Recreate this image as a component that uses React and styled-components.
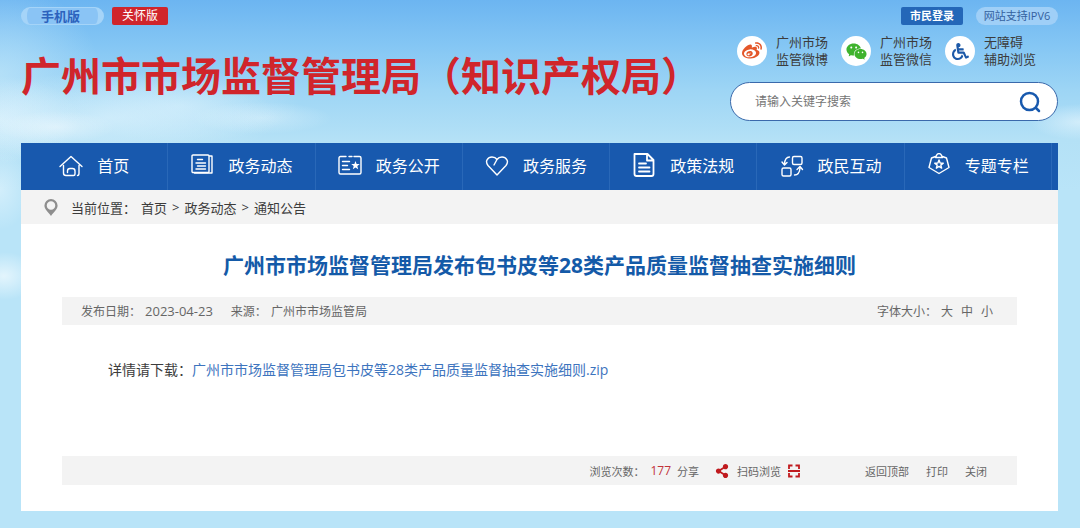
import React from 'react';
import styled, { createGlobalStyle, css } from 'styled-components';
import { FaWeibo, FaWheelchair, FaShareAlt } from 'react-icons/fa';
import { AiFillWechat } from 'react-icons/ai';

const blue = '#1859ae';
const red = '#d0252b';
const sky = '#b9e4f8';

const GlobalStyle = createGlobalStyle`
  *, *::before, *::after { box-sizing: border-box; }
  body {
    margin: 0;
    background: ${sky};
    color: #3c3c3c;
    font-family: "Open Sans", "Noto Sans CJK SC", sans-serif;
  }
  a { color: inherit; text-decoration: none; }
  button, input { font-family: inherit; }
  button { border: 0; padding: 0; background: none; color: inherit; cursor: pointer; }
`;

const Page = styled.div`
  min-height: 100vh;
  padding: 0 22px 17px 21px;
  background:
    radial-gradient(ellipse 60px 16px at 56px 127px, rgba(255, 255, 255, 0.4), transparent),
    radial-gradient(ellipse 170px 46px at 110px 118px, rgba(228, 246, 254, 0.55), transparent),
    radial-gradient(ellipse 120px 36px at 180px 106px, rgba(228, 246, 254, 0.45), transparent),
    radial-gradient(ellipse 70px 16px at 262px 118px, rgba(235, 248, 254, 0.4), transparent),
    radial-gradient(ellipse 80px 44px at 0 120px, rgba(235, 248, 254, 0.6), transparent),
    radial-gradient(ellipse 100px 90px at 0 74px, rgba(200, 234, 250, 0.6), transparent),
    radial-gradient(ellipse 34px 24px at 4px 276px, rgba(245, 252, 255, 0.7), transparent),
    radial-gradient(ellipse 30px 40px at 0 190px, rgba(235, 248, 254, 0.5), transparent),
    radial-gradient(ellipse 50px 18px at 100% 122px, rgba(235, 248, 254, 0.6), transparent),
    linear-gradient(#6cb5f1 0, #84c6f4 45px, #9dd5f5 90px, #b4e1f6 140px, ${sky} 190px);
  background-repeat: no-repeat;
`;

const Header = styled.header`
  display: flex;
  justify-content: space-between;
  padding: 7px 0 22px;
`;

const Brand = styled.div`
  display: flex;
  flex-direction: column;
  gap: 21px;
`;

const TopLinks = styled.div`
  display: flex;
  align-items: center;
  justify-content: ${(p) => (p.$end ? 'flex-end' : 'flex-start')};
  gap: ${(p) => (p.$end ? 13 : 8)}px;
  height: 18px;
`;

const looks = {
  mobile: css`
    width: 83px;
    padding-right: 4px;
    border: solid #a5d4f8;
    border-width: 1px 6px;
    border-radius: 9px;
    background: #8ac4f5;
    color: #2c62bd;
    font-size: 13px;
    font-weight: 700;
  `,
  care: css`
    width: 56px;
    border-radius: 2px;
    background: ${red};
    color: #fff;
    font-size: 12px;
  `,
  login: css`
    width: 62px;
    border-radius: 2px;
    background: #2467b8;
    color: #fff;
    font-size: 11px;
    font-weight: 700;
  `,
  ipv6: css`
    width: 82px;
    border-radius: 9px;
    background: #9fcff7;
    color: #34619f;
    font-size: 11px;
  `,
};

const Tag = styled.a`
  display: flex;
  align-items: center;
  justify-content: center;
  height: 18px;
  line-height: 16px;
  white-space: nowrap;
  ${(p) => looks[p.$look]}
`;

const SiteName = styled.h1`
  margin: 0;
  color: ${red};
  font-size: 40px;
  line-height: 60px;
  font-weight: 700;
  white-space: nowrap;
`;

const Tools = styled.div`
  width: 328px;
`;

const Channels = styled.div`
  display: grid;
  grid-template-columns: repeat(3, 104px);
  padding: 9px 0 14px 7px;
`;

const Channel = styled.a`
  display: flex;
  align-items: center;
  gap: 9px;
  font-size: 13px;
  line-height: 17px;
  white-space: pre-line;
`;

const Disc = styled.span`
  display: grid;
  place-items: center;
  width: 30px;
  height: 30px;
  border-radius: 50%;
  background: #fff;
  color: ${(p) => p.$color};
`;

const Search = styled.form`
  display: flex;
  align-items: center;
  height: 39px;
  padding: 0 15px 0 24px;
  border: 1px solid #3a69ab;
  border-radius: 20px;
  background: #fff;
  button { display: flex; color: ${blue}; }
`;

const SearchInput = styled.input`
  flex: 1;
  min-width: 0;
  padding: 0;
  border: 0;
  outline: 0;
  background: none;
  font-size: 12px;
  &::placeholder { color: #757575; opacity: 1; }
`;

const Nav = styled.nav`
  display: flex;
  height: 47px;
  padding-right: 6px;
  background: ${blue};
`;

const NavItem = styled.a`
  flex: 1;
  display: flex;
  align-items: center;
  justify-content: center;
  gap: 14px;
  padding-bottom: 3px;
  border-right: 1px solid #2968b8;
  color: #fff;
  font-size: 16px;
  white-space: nowrap;
`;

const Card = styled.main`
  background: #fff;
`;

const Crumbs = styled.nav`
  display: flex;
  align-items: center;
  gap: 5px;
  height: 34px;
  padding: 0 23px;
  background: #f3f3f3;
  font-size: 13px;
  svg { margin-right: 8px; }
`;

const Article = styled.article`
  padding: 26px 41px 26px;
`;

const Title = styled.h2`
  margin: 0 0 17px;
  color: #145aa8;
  font-size: 21px;
  line-height: 30px;
  font-weight: 700;
  text-align: center;
`;

const Bar = styled.div`
  display: flex;
  align-items: center;
  justify-content: space-between;
  height: 28px;
  padding: 0 24px 0 19px;
  background: #f3f3f3;
  color: #666;
  font-size: 12px;
`;

const Group = styled.div`
  display: flex;
  align-items: center;
  gap: ${(p) => p.$gap}px;
  button { font-size: 12px; }
`;

const PublishDate = styled.time`
  margin-right: 14px;
  font-size: 13px;
`;

const Body = styled.p`
  min-height: 98px;
  margin: 33px 0 0;
  padding: 0 46px;
  font-size: 14px;
  line-height: 24px;
`;

const Download = styled.a`
  color: #3d74be;
`;

const ActionBar = styled(Bar)`
  justify-content: flex-end;
  gap: 64px;
  height: 29px;
  padding: 0 30px;
  font-size: 11px;
  button { font-size: 11px; }
`;

const Share = styled.button`
  display: flex;
  align-items: center;
  gap: ${(p) => p.$gap}px;
  svg { color: #c01a1e; }
`;

const Count = styled.span`
  color: #c2343a;
  font-size: 12px;
  margin: 0 4px;
`;

const Line = ({ children, size = 24, width = 1.4 }) => (
  <svg width={size} height={size} viewBox="0 0 24 24" fill="none" stroke="currentColor"
    strokeWidth={width} strokeLinecap="round" strokeLinejoin="round" aria-hidden="true">
    {children}
  </svg>
);

const star = (x, y, r) =>
  Array.from({ length: 10 }, (_, i) => {
    const a = (Math.PI / 5) * i - Math.PI / 2;
    const d = i % 2 ? r * 0.42 : r;
    return `${x + d * Math.cos(a)},${y + d * Math.sin(a)}`;
  }).join(' ');

const HomeIcon = () => (
  <Line>
    <path d="M1 13.500 12 3.500l11 10M4.500 12.500V20q0 2.500 2.500 2.500h7.500q1.500 0 1.500-1.500v-3q0-2.500-2.500-2.500h-2.500q-2.500 0-2.500 2.500v1.500M20 12.500V20q0 2.500-1.500 2.500" />
  </Line>
);
const NewsIcon = () => (
  <Line>
    <rect x="2" y="2" width="17" height="17.500" rx="1" />
    <path d="M19.500 3H22v17H4.500M7.500 6.500h5M6 10h9.500M7.500 13h8M6 16h9.500" />
  </Line>
);
const OpenIcon = () => (
  <Line>
    <path d="M8 3.500H2.500Q1 3.500 1 5v14.500Q1 21 2.500 21h19q1.500 0 1.500-1.500V5q0-1.500-1.500-1.500H16M11 3.500h3M4.500 8.500h7M4.500 12.500h5M4.500 16.500h7" />
    <polygon points={star(17.5, 12.5, 4.5)} fill="currentColor" stroke="none" />
  </Line>
);
const HeartIcon = () => (
  <Line>
    <path d="M12 22 3 12.500C-.5 8 3 4 7 4c2.500 0 4 1 5 2.500C13 5 14.500 4 17 4c4 0 7.500 4 4 8.500ZM12 6.500 9 12" />
  </Line>
);
const FileIcon = () => (
  <Line width={1.8}>
    <path d="M2.500 1h13l6 6v14q0 2-2 2h-15q-2 0-2-2ZM15 1v6.500h6.500M7 10.500h7M7 14.500h10.500M7 18.500h10.500" />
  </Line>
);
const SwapIcon = () => (
  <Line>
    <rect x="12.500" y="3.500" width="9.500" height="8" rx="1.500" />
    <rect x="2" y="15" width="9" height="8" rx="1.500" />
    <path d="M9.500 4Q5 4 4.500 11M2 9l2.500 3L7 9.500M14.500 22q5 0 5.500-7M17 16.500l3-3 2.500 3" />
  </Line>
);
const BadgeIcon = () => (
  <Line>
    <path d="M8.500 3.500 4.500 5 2 14.500 12 20.500l10-6L19.500 5l-4-1.500M8.500 4.500 10 1.500Q12-.5 14 1.500l1.500 3Z" />
    <polygon points={star(12, 11.5, 4.5)} />
  </Line>
);

const navItems = [
  ['首页', HomeIcon],
  ['政务动态', NewsIcon],
  ['政务公开', OpenIcon],
  ['政务服务', HeartIcon],
  ['政策法规', FileIcon],
  ['政民互动', SwapIcon],
  ['专题专栏', BadgeIcon],
];

const channels = [
  ['广州市场\n监管微博', <FaWeibo size={20} />, '#e4572a'],
  ['广州市场\n监管微信', <AiFillWechat size={23} />, '#3fb32e'],
  ['无障碍\n辅助浏览', <FaWheelchair size={17} />, '#1c59a8'],
];

export default function App() {
  return (
    <Page>
      <GlobalStyle />
      <Header>
        <Brand>
          <TopLinks>
            <Tag href="#" $look="mobile">手机版</Tag>
            <Tag href="#" $look="care">关怀版</Tag>
          </TopLinks>
          <SiteName>广州市市场监督管理局（知识产权局）</SiteName>
        </Brand>
        <Tools>
          <TopLinks $end>
            <Tag href="#" $look="login">市民登录</Tag>
            <Tag href="#" $look="ipv6">网站支持IPV6</Tag>
          </TopLinks>
          <Channels>
            {channels.map(([label, icon, color]) => (
              <Channel href="#" key={label}>
                <Disc $color={color}>{icon}</Disc>
                <span>{label}</span>
              </Channel>
            ))}
          </Channels>
          <Search onSubmit={(e) => e.preventDefault()}>
            <SearchInput type="text" aria-label="搜索" placeholder="请输入关键字搜索" />
            <button type="submit" aria-label="搜索">
              <Line width={2.5}>
                <circle cx="11.500" cy="11.500" r="8.500" />
                <path d="m18 18 3 3" />
              </Line>
            </button>
          </Search>
        </Tools>
      </Header>

      <Nav>
        {navItems.map(([label, Icon]) => (
          <NavItem href="#" key={label}>
            <Icon />
            {label}
          </NavItem>
        ))}
      </Nav>

      <Card>
        <Crumbs aria-label="当前位置">
          <svg width="14" height="17" viewBox="0 0 13 16" aria-hidden="true">
            <path fillRule="evenodd" fill="#8e8e8e"
              d="M6.500 0A6.200 6.200 0 0 0 .3 6.200C.3 10 4 12.500 6.500 16 9 12.500 12.700 10 12.700 6.200A6.200 6.200 0 0 0 6.500 0Zm0 2.200a4 4 0 1 1 0 8 4 4 0 0 1 0-8Z" />
          </svg>
          <span>当前位置：</span>
          <a href="#">首页</a>
          <span>&gt;</span>
          <a href="#">政务动态</a>
          <span>&gt;</span>
          <a href="#">通知公告</a>
        </Crumbs>

        <Article>
          <Title>广州市市场监督管理局发布包书皮等28类产品质量监督抽查实施细则</Title>
          <Bar>
            <Group $gap={4}>
              <span>发布日期：</span>
              <PublishDate dateTime="2023-04-23">2023-04-23</PublishDate>
              <span>来源：</span>
              <span>广州市市场监管局</span>
            </Group>
            <Group $gap={4}>
              <span>字体大小：</span>
              <Group $gap={8}>
                <button type="button">大</button>
                <button type="button">中</button>
                <button type="button">小</button>
              </Group>
            </Group>
          </Bar>
          <Body>
            详情请下载：
            <Download href="#">广州市市场监督管理局包书皮等28类产品质量监督抽查实施细则.zip</Download>
          </Body>
          <ActionBar>
            <Group $gap={2}>
              <span>浏览次数：</span>
              <Count>177</Count>
              <Group $gap={8}>
                <Share type="button" $gap={16}>
                  分享
                  <FaShareAlt size={14} />
                </Share>
                <Share type="button" $gap={6}>
                  扫码浏览
                  <svg width="14" height="14" viewBox="0 0 14 14" fill="none" stroke="currentColor" strokeWidth="1.8" aria-hidden="true">
                    <path d="M5.500 1.500H2V5M8.500 1.500H12V5M12 9v3.500H8.500M5.500 12.500H2V9M1 7h12" />
                  </svg>
                </Share>
              </Group>
            </Group>
            <Group $gap={17}>
              <button type="button">返回顶部</button>
              <button type="button">打印</button>
              <button type="button">关闭</button>
            </Group>
          </ActionBar>
        </Article>
      </Card>
    </Page>
  );
}
